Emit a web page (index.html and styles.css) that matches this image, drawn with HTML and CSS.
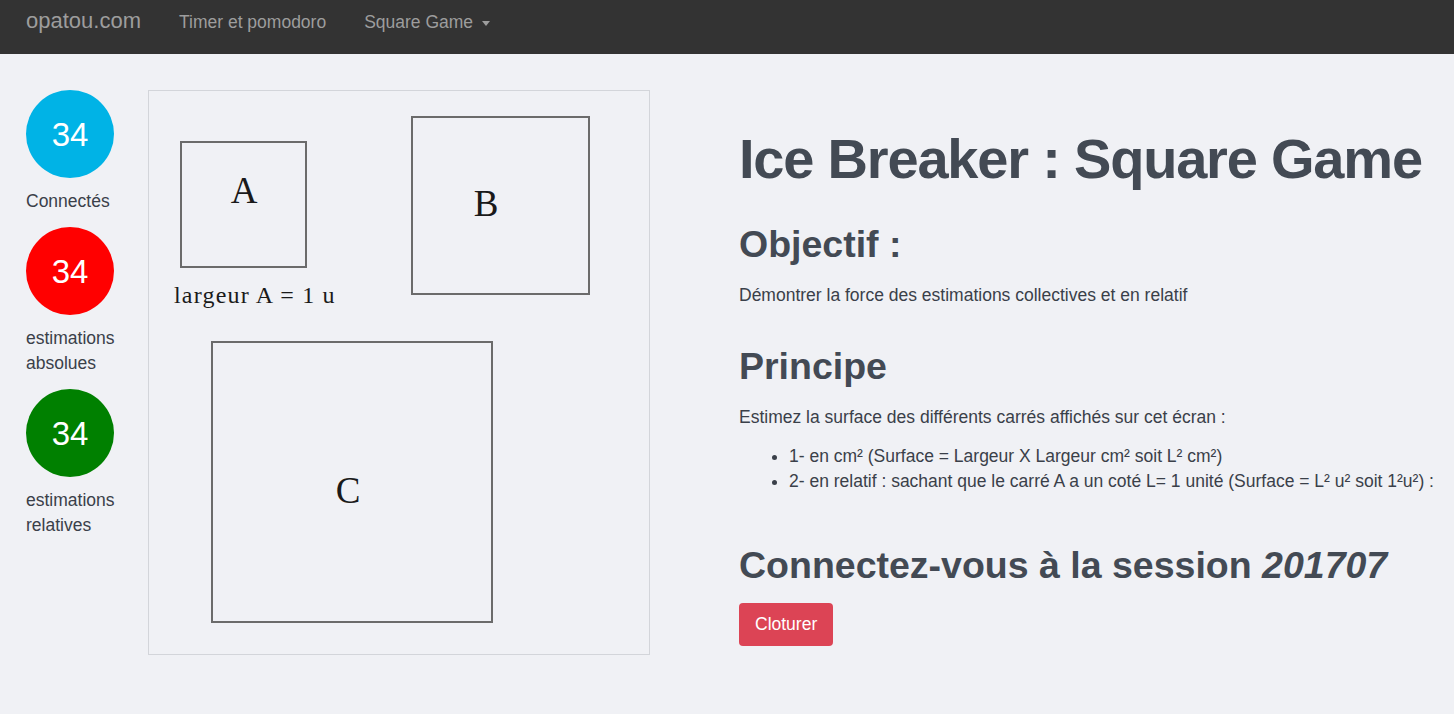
FILE: index.html
```html
<!DOCTYPE html>
<html lang="fr">
<head>
    <meta charset="UTF-8">
    <meta name="viewport" content="width=device-width, initial-scale=1.0">
    <title>Ice Breaker : Square Game</title>
    <link rel="stylesheet" href="styles.css">
</head>
<body>
    <nav class="navbar">
        <a class="brand" href="#">opatou.com</a>
        <a class="nav-link" href="#">Timer et pomodoro</a>
        <a class="nav-link" href="#">Square Game <span class="caret"></span></a>
    </nav>

    <div class="main">
        <div class="stats">
            <div class="stat">
                <div class="bubble cyan">34</div>
                <div class="stat-label">Connectés</div>
            </div>
            <div class="stat">
                <div class="bubble red">34</div>
                <div class="stat-label">estimations<br>absolues</div>
            </div>
            <div class="stat">
                <div class="bubble green">34</div>
                <div class="stat-label">estimations<br>relatives</div>
            </div>
        </div>

        <div class="board">
            <svg width="500" height="563" viewBox="0 0 500 563">
                <g fill="none" stroke="#6b6b6b" stroke-width="2">
                    <rect x="32" y="51" width="125" height="125"/>
                    <rect x="263" y="26" width="177" height="177"/>
                    <rect x="63" y="251" width="280" height="280"/>
                </g>
                <g font-family="'Liberation Serif', serif" fill="#1a1a1a" text-anchor="middle">
                    <text x="95" y="112" font-size="37">A</text>
                    <text x="337" y="125" font-size="37">B</text>
                    <text x="199" y="412" font-size="37">C</text>
                </g>
                <text x="25" y="212" font-family="'Liberation Serif', serif" font-size="24" letter-spacing="1.2" fill="#1a1a1a">largeur A = 1 u</text>
            </svg>
        </div>

        <div class="content">
            <h1>Ice Breaker : Square Game</h1>
            <h2>Objectif :</h2>
            <p>Démontrer la force des estimations collectives et en relatif</p>
            <h2>Principe</h2>
            <p>Estimez la surface des différents carrés affichés sur cet écran :</p>
            <ul>
                <li>1- en cm² (Surface = Largeur X Largeur cm² soit L² cm²)</li>
                <li>2- en relatif : sachant que le carré A a un coté L= 1 unité (Surface = L² u² soit 1²u²) :</li>
            </ul>
            <h2 class="session">Connectez-vous à la session <em>201707</em></h2>
            <button class="btn-danger">Cloturer</button>
        </div>
    </div>
</body>
</html>
```

FILE: styles.css
```css
body {
    margin: 0;
    font-family: "Liberation Sans", Arial, sans-serif;
    font-size: 17.5px;
    line-height: 25px;
    color: #3a4049;
    background-color: #f0f1f5;
}
.navbar {
    display: flex;
    align-items: baseline;
    height: 54px;
    box-sizing: border-box;
    padding: 10px 0 0 26px;
    background-color: #333;
}
.navbar a {
    text-decoration: none;
    color: #9d9d9d;
    line-height: 22px;
}
.brand {
    font-size: 22px;
    margin-right: 38px;
}
.nav-link {
    font-size: 17.5px;
    margin-right: 38px;
}
.caret {
    display: inline-block;
    width: 0;
    height: 0;
    margin-left: 4px;
    vertical-align: middle;
    border-top: 5px solid #9d9d9d;
    border-left: 4.5px solid transparent;
    border-right: 4.5px solid transparent;
}
.main {
    display: flex;
    align-items: flex-start;
    padding: 36px 0 0 26px;
}
.stats {
    width: 122px;
    display: flex;
    flex-direction: column;
    gap: 13px;
}
.bubble {
    width: 88px;
    height: 88px;
    border-radius: 50%;
    display: flex;
    align-items: center;
    justify-content: center;
    color: white;
    font-size: 33px;
}
.cyan { background-color: #00b3e6; }
.red { background-color: #ff0000; }
.green { background-color: #008000; }
.stat-label {
    margin-top: 11px;
}
.board {
    border: 1px solid #d3d5da;
    width: 500px;
    height: 563px;
}
.board svg {
    display: block;
}
.content {
    margin-left: 89px;
}
h1, h2 {
    color: #434a54;
    font-weight: bold;
}
h1 {
    font-size: 56px;
    line-height: 67px;
    letter-spacing: -1.2px;
    margin: 35px 0 28px;
}
h2 {
    font-size: 37.5px;
    line-height: 48px;
    margin: 0 0 15px;
}
p {
    margin: 0 0 34px;
}
ul {
    margin: -20px 0 47px;
    padding-left: 50px;
}
.session em {
    font-style: italic;
}
.btn-danger {
    background-color: #dc4455;
    color: white;
    border: none;
    border-radius: 4px;
    font-family: inherit;
    font-size: 17.5px;
    padding: 0 16px;
    height: 43px;
    margin-top: -1px;
}
```
